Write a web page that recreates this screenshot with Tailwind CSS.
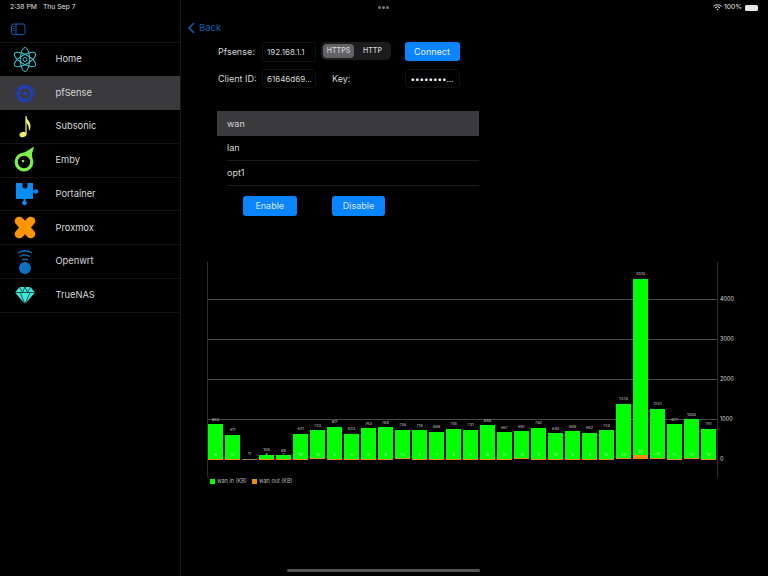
<!DOCTYPE html>
<html lang="en">
<head>
    <meta charset="UTF-8">
    <title>pfSense</title>
    <script src="https://cdn.jsdelivr.net/npm/@tailwindcss/browser@4"></script>
</head>
<body class="bg-black">
<div class="relative flex w-[768px] h-[576px] overflow-hidden bg-black text-[#d8d8d8] font-['Inter','Liberation_Sans',sans-serif]">

    <!-- Status bar -->
    <div class="absolute top-0 left-0 right-0 h-[15px] flex items-center justify-between pl-[10px] pr-[10px] text-[6.8px] text-[#e0e0e0]">
        <div class="flex gap-[6px]"><span>2:38 PM</span><span>Thu Sep 7</span></div>
        <div class="absolute left-[378px] top-[6px] flex gap-[1.5px]">
            <span class="w-[2.5px] h-[2.5px] rounded-full bg-[#777]"></span>
            <span class="w-[2.5px] h-[2.5px] rounded-full bg-[#777]"></span>
            <span class="w-[2.5px] h-[2.5px] rounded-full bg-[#777]"></span>
        </div>
        <div class="flex items-center gap-[2px]">
            <svg width="9" height="7" viewBox="0 0 9 7" fill="none" stroke="#e0e0e0" stroke-width="1"><path d="M.5 2.4a5.6 5.6 0 0 1 8 0M2 3.9a3.5 3.5 0 0 1 5 0"/><path d="M3.5 5.3a1.4 1.4 0 0 1 2 0L4.5 6.4z" fill="#e0e0e0" stroke="none"/></svg>
            <span>100%</span>
            <span class="ml-[1px] w-[13px] h-[6px] rounded-[1.5px] bg-[#e8e8e8]"></span>
        </div>
    </div>

    <!-- Sidebar -->
    <aside class="w-[181px] shrink-0 border-r border-[#1a1a1a] pt-[16.5px]">
        <div class="h-[25px] pl-[11px] flex items-center">
            <svg width="15" height="13" viewBox="0 0 15 13" fill="none" stroke="#0a63b5" stroke-width="1"><rect x=".5" y="1" width="13.5" height="10.5" rx="2"/><path d="M5 1v10.5"/><path d="M2 3.5h1.5M2 5.5h1.5M2 7.5h1.5" stroke-width=".8"/></svg>
        </div>
        <nav id="menu" class="border-t border-[#141414]">
            <div class="h-[33.75px] flex items-center pl-[8px] gap-[13.5px] text-[9.3px]">
                <svg width="34" height="33" viewBox="0 0 34 33" fill="none" stroke="#3cc6cc" stroke-width="1"><ellipse cx="17" cy="16.5" rx="4.6" ry="12"/><ellipse cx="17" cy="16.5" rx="4.6" ry="12" transform="rotate(60 17 16.5)"/><ellipse cx="17" cy="16.5" rx="4.6" ry="12" transform="rotate(120 17 16.5)"/><circle cx="17" cy="16.5" r="2"/></svg>
                <span>Home</span>
            </div>
            <div class="h-[33.75px] flex items-center pl-[8px] gap-[13.5px] text-[9.3px] bg-[#3a3a3c]">
                <svg width="34" height="33" viewBox="0 0 34 33" fill="none" stroke="#1e3fc0"><circle cx="17" cy="16.5" r="6.5" stroke-width="2.6"/><circle cx="17" cy="16.5" r="8.800" stroke-width="2" stroke-dasharray="2.2 2.4"/><circle cx="17" cy="16.5" r="2" fill="#1e3fc0" stroke="none"/></svg>
                <span>pfSense</span>
            </div>
            <div class="h-[33.75px] flex items-center pl-[8px] gap-[13.5px] text-[9.3px] border-b border-[#141414]">
                <svg width="34" height="33" viewBox="0 0 34 33" fill="none"><ellipse cx="15" cy="24.5" rx="3.6" ry="2.6" fill="#f2f26a" transform="rotate(-20 15 24.5)"/><path d="M18 24V6" stroke="#f2f26a" stroke-width="1.2"/><path d="M18 6c.5 4 5 5 4.5 11-.2 2-1 3-1.5 4 0-4-1-7-3-8.500z" fill="#f2f26a"/></svg>
                <span>Subsonic</span>
            </div>
            <div class="h-[33.75px] flex items-center pl-[8px] gap-[13.5px] text-[9.3px] border-b border-[#141414]">
                <svg width="34" height="33" viewBox="0 0 34 33" fill="none"><circle cx="16" cy="18" r="7.800" stroke="#7cf04c" stroke-width="3.200"/><path d="M15 9c3-1 7-4 11-6.500-.5 3-1.500 5-2 7 .5 3 0 6-1 8-2-4-4-6-8-8.500z" fill="#7cf04c"/><circle cx="15" cy="17" r="1.300" fill="#7cf04c"/></svg>
                <span>Emby</span>
            </div>
            <div class="h-[33.75px] flex items-center pl-[8px] gap-[13.5px] text-[9.3px] border-b border-[#141414]">
                <svg width="34" height="33" viewBox="0 0 34 33" fill="#0a8cf5"><path d="M8 6h6.500v3a2.500 2.500 0 0 0 5 0V6H25v16H8z"/><rect x="24" y="13.500" width="4" height="2"/><circle cx="28" cy="14.500" r="2.200"/><rect x="15.500" y="21" width="2" height="4"/><circle cx="16.500" cy="26" r="2.300"/></svg>
                <span>Portainer</span>
            </div>
            <div class="h-[33.75px] flex items-center pl-[8px] gap-[13.5px] text-[9.3px] border-b border-[#141414]">
                <svg width="34" height="33" viewBox="0 0 34 33" fill="#ff9500"><path d="M10 6c3-1 5 1 7 4 2-3 4-5 7-4 4 1 4 5 2 7l-3 3.500 3 3.500c2 2 2 6-2 7-3 1-5-1-7-4-2 3-4 5-7 4-4-1-4-5-2-7l3-3.500-3-3.500c-2-2-2-6 2-7z"/></svg>
                <span>Proxmox</span>
            </div>
            <div class="h-[33.75px] flex items-center pl-[8px] gap-[13.5px] text-[9.3px] border-b border-[#141414]">
                <svg width="34" height="33" viewBox="0 0 34 33" fill="none" stroke="#0f72bd" stroke-width="1.300"><circle cx="17" cy="23" r="6" fill="#0f72bd" stroke="none"/><path d="M10 8c4-3 10-3 14 0M12 11.500c3-2 7-2 10 0M14 15c2-1 4-1 6 0"/></svg>
                <span>Openwrt</span>
            </div>
            <div class="h-[33.75px] flex items-center pl-[8px] gap-[13.5px] text-[9.3px] border-b border-[#141414]">
                <svg width="34" height="33" viewBox="0 0 34 33" fill="#3fe6d6"><path d="M11.500 8h11L27 13.500 17 25 7 13.500z"/><path d="M7 13.500h20M12 13.500l5 11.500 5-11.500M11.500 8l3 5.500L17 8l2.500 5.500 3-5.500" fill="none" stroke="#000" stroke-width=".6"/></svg>
                <span>TrueNAS</span>
            </div>
        </nav>
    </aside>

    <!-- Detail -->
    <main class="flex-1 min-w-0 text-[9px]">
        <div class="h-[16px] mt-[20px] ml-[7px] flex items-center gap-[4px] text-[#0a63b5] text-[9.5px]">
            <svg width="7" height="12" viewBox="0 0 7 12" fill="none" stroke="#0a63b5" stroke-width="1.500"><path d="M6 1 1 6l5 5"/></svg>
            <span>Back</span>
        </div>

        <!-- Connection form -->
        <div class="ml-[37px] mt-[6px] flex items-center h-[20px]">
            <span class="w-[44px]">Pfsense:</span>
            <div class="w-[54px] h-[20px] flex items-center pl-[4px] rounded-[3px] border border-[#111] text-[8px]">192.168.1.1</div>
            <div class="ml-[5px] w-[70px] h-[18px] -mt-[2px] p-[2px] flex rounded-[5px] bg-[#1c1c1e] text-[7px] font-medium">
                <span class="w-[31px] flex items-center justify-center rounded-[4px] bg-[#636366]">HTTPS</span>
                <span class="flex-1 flex items-center justify-center pl-[2px]">HTTP</span>
            </div>
            <button class="ml-[13.5px] w-[55px] h-[19.5px] -mt-[1px] rounded-[3px] bg-[#0a84ff] text-[#e8f2ff] text-[9px]">Connect</button>
        </div>
        <div class="ml-[37px] mt-[7px] flex items-center h-[19px]">
            <span class="w-[44px]">Client ID:</span>
            <div class="w-[54px] h-[19px] flex items-center pl-[4px] rounded-[3px] border border-[#111] text-[8px]">61646d69...</div>
            <span class="ml-[16px] w-[72.5px]">Key:</span>
            <div class="w-[55px] h-[19px] flex items-center justify-center rounded-[3px] border border-[#111] text-[8px] text-white">••••••••...</div>
        </div>

        <!-- Interfaces -->
        <ul class="ml-[36px] mt-[23px] w-[262px]">
            <li class="h-[25px] flex items-center pl-[10px] bg-[#3a3a3c]">wan</li>
            <li class="h-[25px] ml-[10px] flex items-center border-b border-[#1c1c1c]">lan</li>
            <li class="h-[24.5px] ml-[10px] flex items-center border-b border-[#1c1c1c]">opt1</li>
        </ul>
        <div class="ml-[62px] mt-[10.5px] flex gap-[35.5px]">
            <button class="w-[53.5px] h-[19.5px] rounded-[3px] bg-[#0a84ff] text-[#d8e8ff] text-[9px]">Enable</button>
            <button class="w-[53px] h-[19.5px] rounded-[3px] bg-[#0a84ff] text-[#d8e8ff] text-[9px]">Disable</button>
        </div>

        <!-- Traffic chart -->
        <div class="ml-[26px] mt-[46.5px] w-[511px]">
            <div class="relative h-[215px] border-l border-r border-[#2e2e2e]">
                <div class="absolute inset-x-0 top-[37px] border-t border-[#4a4a4a]"></div>
                <div class="absolute inset-x-0 top-[77px] border-t border-[#4a4a4a]"></div>
                <div class="absolute inset-x-0 top-[117px] border-t border-[#4a4a4a]"></div>
                <div class="absolute inset-x-0 top-[157px] border-t border-[#4a4a4a]"></div>
                <div class="absolute left-[512px] top-[33px] text-[5.5px] leading-[8px]">4000</div>
                <div class="absolute left-[512px] top-[73px] text-[5.5px] leading-[8px]">3000</div>
                <div class="absolute left-[512px] top-[113px] text-[5.5px] leading-[8px]">2000</div>
                <div class="absolute left-[512px] top-[153px] text-[5.5px] leading-[8px]">1000</div>
                <div class="absolute left-[512px] top-[193px] text-[5.5px] leading-[8px]">0</div>
                <div id="bars" class="relative h-[197px] flex items-end gap-[2px]"></div>
            </div>
            <div class="ml-[3px] h-[8px] flex items-center text-[5.5px] text-[#bbb]">
                <span class="w-[5px] h-[5px] bg-[#00ff00] mr-[2px]"></span><span class="w-[35px]">wan in (KB)</span>
                <span class="w-[5px] h-[5px] bg-[#f08c10] mr-[2px]"></span><span>wan out (KB)</span>
            </div>
        </div>
    </main>

    <!-- Home indicator -->
    <div class="absolute left-[287px] bottom-[4px] w-[193px] h-[3px] rounded-full bg-[#555]"></div>
</div>
<script>
    // [wan in, wan out] per sample, bar height is the total so out sits inside it
    const samples = [[863,9],[611,12],[11,0],[109,8],[89,7],[631,10],[723,13],[811,8],[633,6],[763,9],[789,9],[738,14],[719,6],[688,7],[755,8],[731,9],[840,8],[667,11],[697,13],[782,8],[640,10],[689,8],[662,9],[724,10],[1378,24],[4510,90],[1251,29],[871,11],[1000,16],[761,10]];
    const pxPerKb = 40 / 1000;
    document.getElementById("bars").innerHTML = samples.map(([wanIn, wanOut]) => `
        <div class="w-[15px] flex flex-col items-center">
            <span class="text-[4px] leading-[4px] mb-[2.5px] text-[#ccc]">${wanIn}</span>
            <div class="w-full bg-[#00ff00] flex items-end justify-center ${wanOut ? "pb-[2.5px]" : "bg-[#a0803a]"}" style="height:${(wanIn - wanOut) * pxPerKb}px">
                ${wanOut ? `<span class="text-[4px] leading-[3px] text-[#c8ffc8]">${wanOut}</span>` : ""}
            </div>
            <div class="w-full bg-[#f08c10]" style="height:${wanOut * pxPerKb}px"></div>
        </div>
    `).join("");
</script>
</body>
</html>
